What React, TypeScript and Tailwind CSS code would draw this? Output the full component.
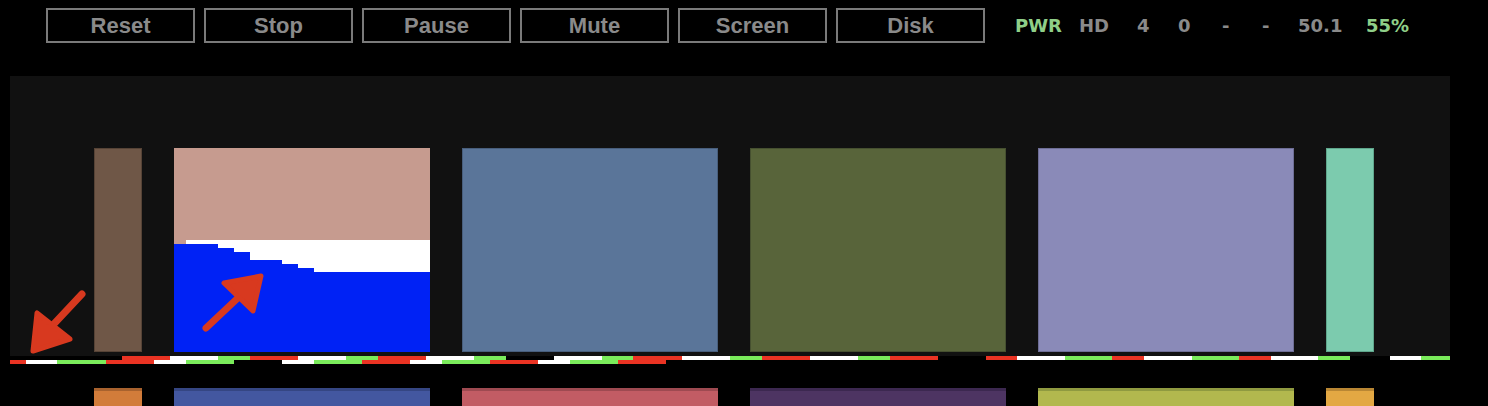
import React from 'react'

type Seg = [number, string]

const R = '#ea3323'
const W = '#ffffff'
const G = '#7aeb5b'
const _ = 'transparent'

// top row of the timeline strip, widths from x = 10
const topRow: Seg[] = [
  [112, _], [48, R], [48, W], [32, G], [48, R], [48, W], [32, G], [48, R], [48, W], [32, G],
  [48, _], [48, W], [31, G], [49, R], [48, W], [32, G], [48, R], [48, W], [32, G], [48, R],
  [48, _], [31, R], [48, W], [47, G], [32, R], [48, W], [47, G], [32, R], [47, W], [32, G],
  [40, _], [31, W], [29, G],
]

const bottomRow: Seg[] = [
  [16, R], [31, W], [49, G], [48, R], [32, W], [48, G], [48, _], [32, W], [48, G], [48, R],
  [32, W], [48, G], [48, R], [32, W], [48, G], [48, R],
]

const buttons = ['Reset', 'Stop', 'Pause', 'Mute', 'Screen', 'Disk']

const status: { label: string; w: string; green?: boolean }[] = [
  { label: 'PWR', w: 'w-[64px]', green: true },
  { label: 'HD', w: 'w-[58px]' },
  { label: '4', w: 'w-[41px]' },
  { label: '0', w: 'w-[44px]' },
  { label: '-', w: 'w-[40px]' },
  { label: '-', w: 'w-[36px]' },
  { label: '50.1', w: 'w-[68px]' },
  { label: '55%', w: 'w-[60px]', green: true },
]

// the fill steps inside the second block: [width, pink height, white band height]
const steps: [number, number, number][] = [
  [12, 96, 0], [32, 92, 4], [16, 92, 8], [16, 92, 12], [32, 92, 20], [16, 92, 24], [16, 92, 28], [116, 92, 32],
]

function Strip({ segs }: { segs: Seg[] }) {
  return (
    <div className="flex h-[4px]">
      {segs.map(([w, c], i) => (
        <div key={i} className="h-full shrink-0" style={{ width: w, background: c }} />
      ))}
    </div>
  )
}

function FillBlock() {
  return (
    <div className="flex h-[204px] w-[256px] shrink-0 bg-[#c69b8f]">
      {steps.map(([w, pink, white], i) => (
        <div key={i} className="flex h-full shrink-0 flex-col" style={{ width: w }}>
          <div className="shrink-0" style={{ height: pink }} />
          <div className="shrink-0 bg-white" style={{ height: white }} />
          <div className="flex-1 bg-[#0022f5]" />
        </div>
      ))}
    </div>
  )
}

function Arrows() {
  return (
    <svg className="pointer-events-none absolute left-0 top-0" width="1488" height="406">
      <g fill="#d8391f" stroke="#d8391f" strokeLinejoin="round" strokeLinecap="round">
        <line x1="82" y1="294" x2="52" y2="326" strokeWidth="7" />
        <polygon points="37,313 33,351 70,339" strokeWidth="5" />
        <line x1="206" y1="328" x2="240" y2="296" strokeWidth="7" />
        <polygon points="224,283 261,276 253,311" strokeWidth="5" />
      </g>
    </svg>
  )
}

export default function App() {
  return (
    <div className="relative h-[406px] w-[1488px] overflow-hidden bg-black">
      <div className="mt-[8px] flex h-[35px] items-center pl-[46px]">
        <div className="flex gap-[9px]">
          {buttons.map((b) => (
            <div
              key={b}
              className="flex h-[35px] w-[149px] items-center justify-center border-2 border-[#7a7a7a] font-['Liberation_Sans',Arial,sans-serif] text-[22px] font-bold leading-none text-[#8a8a8a]"
            >
              {b}
            </div>
          ))}
        </div>
        <div className="ml-[30px] flex font-['DejaVu_Sans',Verdana,sans-serif] text-[18px] font-bold leading-none">
          {status.map((s, i) => (
            <div key={i} className={s.w + ' ' + (s.green ? 'text-[#8fcf88]' : 'text-[#8a8a8a]')}>
              {s.label}
            </div>
          ))}
        </div>
      </div>

      <div className="ml-[10px] mt-[33px] h-[280px] w-[1440px] bg-[#111111] pl-[84px] pt-[72px]">
        <div className="flex gap-[32px]">
          <div className="h-[204px] w-[48px] shrink-0 border border-[#564336] bg-[#6f5747]" />
          <FillBlock />
          <div className="h-[204px] w-[256px] shrink-0 border border-[#485e7c] bg-[#5a7599]" />
          <div className="h-[204px] w-[256px] shrink-0 border border-[#465030] bg-[#58643a]" />
          <div className="h-[204px] w-[256px] shrink-0 border border-[#6e6e96] bg-[#8a8ab8]" />
          <div className="h-[204px] w-[48px] shrink-0 border border-[#5fa68c] bg-[#7ccbae]" />
        </div>
      </div>

      <div className="ml-[10px] w-[1440px]">
        <Strip segs={topRow} />
        <Strip segs={bottomRow} />
      </div>

      <div className="mt-[24px] flex gap-[32px] pl-[94px]">
        <div className="h-[204px] w-[48px] shrink-0 border-t-[3px] border-[#a8622e] bg-[#d27c3a]" />
        <div className="h-[204px] w-[256px] shrink-0 border-t-[3px] border-[#354683] bg-[#4357a0]" />
        <div className="h-[204px] w-[256px] shrink-0 border-t-[3px] border-[#9e4a51] bg-[#c25c64]" />
        <div className="h-[204px] w-[256px] shrink-0 border-t-[3px] border-[#3c2850] bg-[#4d3462]" />
        <div className="h-[204px] w-[256px] shrink-0 border-t-[3px] border-[#8f9a40] bg-[#b2b84e]" />
        <div className="h-[204px] w-[48px] shrink-0 border-t-[3px] border-[#b98734] bg-[#e3a843]" />
      </div>

      <Arrows />
    </div>
  )
}
